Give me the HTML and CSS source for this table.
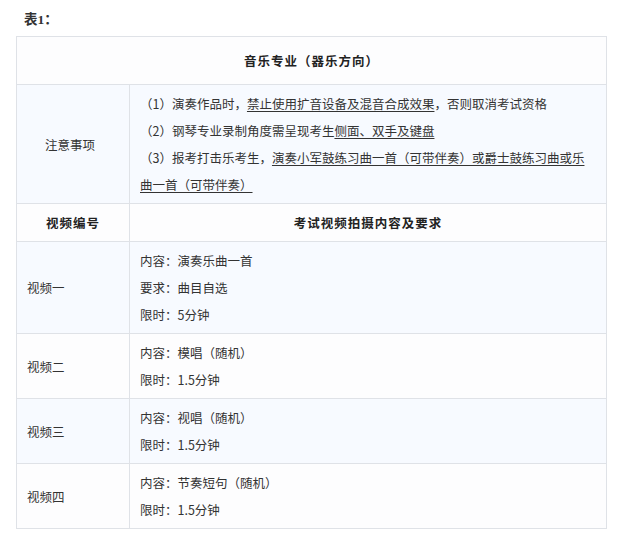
FILE: index.html
```html
<!DOCTYPE html>
<html lang="zh">
<head>
<meta charset="utf-8">
<link rel="stylesheet" href="styles.css">
</head>
<body>
<div class="page">
  <p class="caption">表1：</p>
  <table class="exam">
    <colgroup><col class="c1"><col class="c2"></colgroup>
    <tr class="row-white">
      <th colspan="2" class="title">音乐专业（器乐方向）</th>
    </tr>
    <tr class="row-blue">
      <td class="label center">注意事项</td>
      <td class="notes">
        <div>（1）演奏作品时，<u>禁止使用扩音设备及混音合成效果</u>，否则取消考试资格</div>
        <div>（2）钢琴专业录制角度需呈现考生<u>侧面、双手及键盘</u></div>
        <div>（3）报考打击乐考生，<u>演奏小军鼓练习曲一首（可带伴奏）或爵士鼓练习曲或乐曲一首（可带伴奏）</u></div>
      </td>
    </tr>
    <tr class="row-white">
      <th>视频编号</th>
      <th>考试视频拍摄内容及要求</th>
    </tr>
    <tr class="row-blue">
      <td class="label">视频一</td>
      <td><div>内容：演奏乐曲一首</div><div>要求：曲目自选</div><div>限时：5分钟</div></td>
    </tr>
    <tr class="row-white">
      <td class="label">视频二</td>
      <td><div>内容：模唱（随机）</div><div>限时：1.5分钟</div></td>
    </tr>
    <tr class="row-blue">
      <td class="label">视频三</td>
      <td><div>内容：视唱（随机）</div><div>限时：1.5分钟</div></td>
    </tr>
    <tr class="row-white">
      <td class="label">视频四</td>
      <td><div>内容：节奏短句（随机）</div><div>限时：1.5分钟</div></td>
    </tr>
  </table>
</div>
</body>
</html>
```

FILE: styles.css
```css
html, body {
  margin: 0;
  padding: 0;
  background: #ffffff;
}
.page {
  padding: 0 11px 0 16px;
  font-family: "Noto Sans CJK SC", "Noto Sans", sans-serif;
  color: #333333;
}
.caption {
  margin: 10px 0 6px 8px;
  line-height: 20px;
  font-size: 13.5px;
  font-weight: bold;
  font-family: "Liberation Serif", "Noto Sans CJK SC", serif;
  color: #333333;
}
.exam {
  width: 591px;
  border-collapse: collapse;
  table-layout: fixed;
  font-size: 12.5px;
  line-height: 27px;
}
.c1 { width: 113px; }
.exam td, .exam th {
  border: 1px solid #dfe2e7;
  padding: 5px 16px 5px 10px;
  vertical-align: middle;
  text-align: left;
  font-weight: normal;
}
.exam th {
  text-align: center;
  font-weight: bold;
  color: #222222;
  padding: 5px 10px;
  letter-spacing: 1px;
}
.exam th.title {
  padding: 10px;
}
.row-white { background: #fdfdfe; }
.row-blue { background: #f7faff; }
.exam td.center { text-align: center; }
.exam u {
  text-underline-offset: 2px;
}
```
